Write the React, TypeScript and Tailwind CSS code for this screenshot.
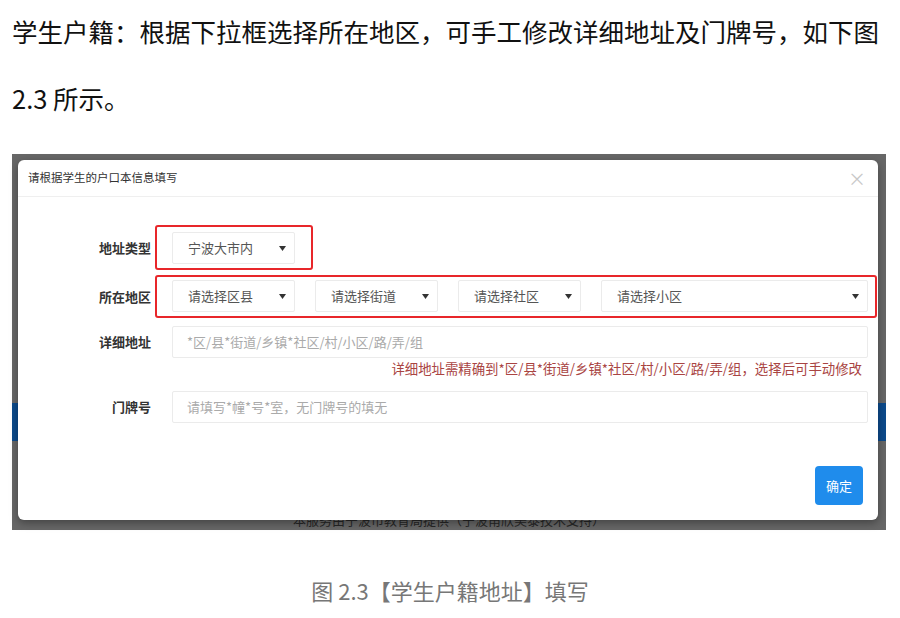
import React from "react";

const FONT = { fontFamily: '"Noto Sans CJK SC", "Noto Sans", sans-serif' };

function Arrow() {
  return (
    <svg width="7" height="5" viewBox="0 0 7 5" className="shrink-0">
      <path d="M0 0 L7 0 L3.5 5 Z" fill="#333" />
    </svg>
  );
}

function Select({ label, className }: { label: string; className: string }) {
  return (
    <div
      className={`flex h-[32px] items-center justify-between rounded-[2px] border border-[#ebebeb] bg-white pl-[15px] pr-[8px] text-[13px] text-[#555] ${className}`}
    >
      <span>{label}</span>
      <Arrow />
    </div>
  );
}

function Label({ children }: { children: React.ReactNode }) {
  return (
    <div className="w-[133px] shrink-0 text-right text-[13px] font-bold text-[#333]">{children}</div>
  );
}

function Input({ placeholder }: { placeholder: string }) {
  return (
    <div className="flex h-[32px] w-[696px] items-center rounded-[2px] border border-[#ebebeb] bg-white pl-[14px] text-[13px] text-[#aaa]">
      {placeholder}
    </div>
  );
}

export default function App() {
  return (
    <div className="min-h-[618px] w-[900px] bg-white" style={FONT}>
      <p className="-mt-[3px] whitespace-nowrap pl-[12px] text-[25.5px] leading-[67px] text-[#111]">
        学生户籍：根据下拉框选择所在地区，可手工修改详细地址及门牌号，如下图
        <br />
        2.3 所示。
      </p>

      <div className="relative ml-[12px] mt-[23px] w-[874px] bg-[#676767] pb-[10px] pl-[6px] pr-[8px] pt-[6px]">
        {/* page behind the overlay */}
        <div className="absolute left-0 right-0 top-[249px] h-[38px] bg-[#0c4a8b]" />
        <div className="absolute left-0 right-0 top-[358px] text-center text-[13px] leading-[16px] text-[#262626]">
          本服务由宁波市教育局提供（宁波甬欣美泰技术支持）
        </div>

        <div className="relative z-10 h-[360px] w-[860px] rounded-[6px] bg-white shadow-[0_3px_8px_rgba(0,0,0,0.35)]">
          <div className="flex h-[37px] items-center justify-between border-b border-[#efefef] pl-[10px] pr-[12px]">
            <span className="text-[11.5px] text-[#333]">请根据学生的户口本信息填写</span>
            <span className="text-[18px] leading-none text-[#c8c8c8]">×</span>
          </div>

          <div className="pt-[28px]">
            <div className="flex items-center">
              <Label>地址类型</Label>
              <div className="ml-[4px] rounded-[3px] border-2 border-[#e8262a] pb-[4px] pl-[15px] pr-[16px] pt-[5px]">
                <Select label="宁波大市内" className="w-[123px]" />
              </div>
            </div>

            <div className="mt-[5px] flex items-center">
              <Label>所在地区</Label>
              <div className="ml-[4px] flex gap-[20px] rounded-[3px] border-2 border-[#e8262a] pb-[4px] pl-[15px] pr-[7px] pt-[3px]">
                <Select label="请选择区县" className="w-[123px]" />
                <Select label="请选择街道" className="w-[123px]" />
                <Select label="请选择社区" className="w-[123px]" />
                <Select label="请选择小区" className="w-[267px]" />
              </div>
            </div>

            <div className="mt-[8px] flex items-center">
              <Label>详细地址</Label>
              <div className="ml-[21px]">
                <Input placeholder="*区/县*街道/乡镇*社区/村/小区/路/弄/组" />
              </div>
            </div>
            <div className="ml-[154px] w-[696px] pr-[6px] text-right text-[13.4px] leading-[20px] text-[#a94442]">
              详细地址需精确到*区/县*街道/乡镇*社区/村/小区/路/弄/组，选择后可手动修改
            </div>

            <div className="mt-[13px] flex items-center">
              <Label>门牌号</Label>
              <div className="ml-[21px]">
                <Input placeholder="请填写*幢*号*室，无门牌号的填无" />
              </div>
            </div>

            <div className="mt-[43px] flex justify-end pr-[15px]">
              <button
                type="button"
                className="h-[39px] w-[48px] rounded-[4px] bg-[#1f8cec] text-[13px] text-white"
              >
                确定
              </button>
            </div>
          </div>
        </div>
      </div>

      <p className="mt-[45px] text-center text-[22px] leading-[30px] text-[#777]">
        图 2.3【学生户籍地址】填写
      </p>
    </div>
  );
}
